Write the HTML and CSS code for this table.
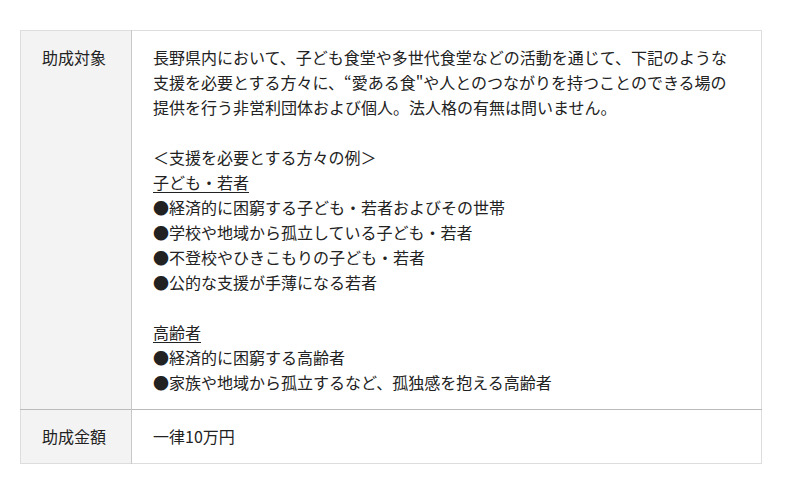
FILE: index.html
```html
<!DOCTYPE html>
<html lang="ja">
<head>
  <meta charset="UTF-8" />
  <meta name="viewport" content="width=device-width, initial-scale=1.0" />
  <title>助成内容</title>
  <link rel="stylesheet" href="styles.css">
</head>
<body>

<div class="wrap">
  <table class="grant-table">
    <tr>
      <th>助成対象</th>
      <td>
        長野県内において、子ども食堂や多世代食堂などの活動を通じて、下記のような支援を必要とする方々に、“愛ある食"や人とのつながりを持つことのできる場の提供を行う非営利団体および個人。法人格の有無は問いません。<br>
        <br>
        ＜支援を必要とする方々の例＞<br>
        <u>子ども・若者</u><br>
        ●経済的に困窮する子ども・若者およびその世帯<br>
        ●学校や地域から孤立している子ども・若者<br>
        ●不登校やひきこもりの子ども・若者<br>
        ●公的な支援が手薄になる若者<br>
        <br>
        <u>高齢者</u><br>
        ●経済的に困窮する高齢者<br>
        ●家族や地域から孤立するなど、孤独感を抱える高齢者
      </td>
    </tr>
    <tr>
      <th>助成金額</th>
      <td>一律10万円</td>
    </tr>
  </table>
</div>

</body>
</html>
```

FILE: styles.css
```css
body {
  margin: 0;
  background: #fff;
  color: #222;
  font-family: "Noto Sans CJK JP", "Noto Sans", sans-serif;
  font-size: 16px;
}

.wrap {
  padding: 30px 20px;
}

.grant-table {
  width: 742px;
  border-collapse: collapse;
  border: 1px solid #ddd;
  line-height: 25px;
}

.grant-table th,
.grant-table td {
  padding: 14px 21px;
  vertical-align: top;
  text-align: left;
}

.grant-table th {
  width: 68px;
  font-weight: normal;
  background: #f3f3f3;
  border-right: 1px solid #c8c8c8;
}

.grant-table tr + tr th,
.grant-table tr + tr td {
  border-top: 1px solid #bbb;
}

.grant-table u {
  text-underline-offset: 3px;
}
```
